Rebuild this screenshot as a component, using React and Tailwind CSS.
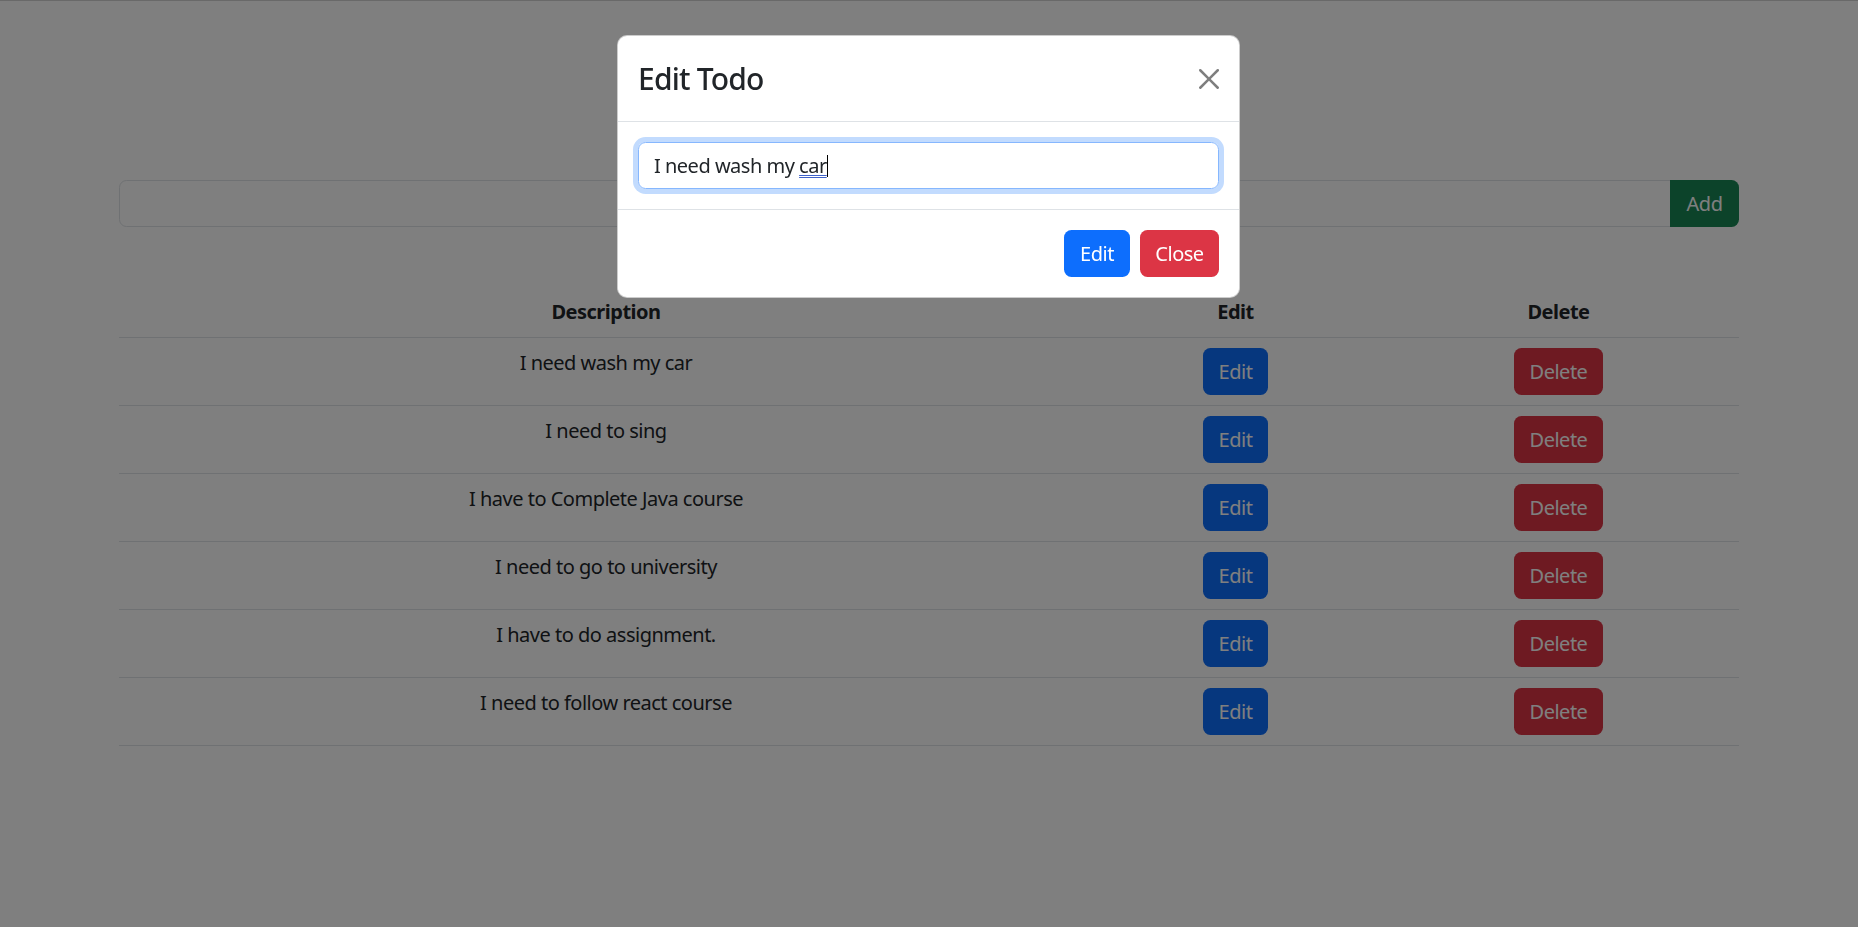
import React from "react";

const todos = [
    "I need wash my car",
    "I need to sing",
    "I have to Complete Java course",
    "I need to go to university",
    "I have to do assignment.",
    "I need to follow react course",
];

function CloseIcon() {
    return (
        <svg width="20" height="20" viewBox="0 0 16 16" className="opacity-50">
            <path
                fill="#000"
                d="M.293.293a1 1 0 0 1 1.414 0L8 6.586 14.293.293a1 1 0 1 1 1.414 1.414L9.414 8l6.293 6.293a1 1 0 0 1-1.414 1.414L8 9.414l-6.293 6.293a1 1 0 0 1-1.414-1.414L6.586 8 .293 1.707a1 1 0 0 1 0-1.414z"
            />
        </svg>
    );
}

function TodoRow({ text }) {
    return (
        <div className="grid grid-cols-[974px_285px_361px] border-b border-[#dee2e6] py-[10px]">
            <div className="text-center">{text}</div>
            <div className="flex justify-center">
                <button type="button" className="w-[65px] h-[47px] rounded-[7.5px] bg-[#0d6efd] text-white">
                    Edit
                </button>
            </div>
            <div className="flex justify-center">
                <button type="button" className="w-[89px] h-[47px] rounded-[7.5px] bg-[#dc3545] text-white">
                    Delete
                </button>
            </div>
        </div>
    );
}

export default function App() {
    return (
        <div className="relative min-h-[927px] bg-white border-t border-[#d2d2d2] font-['Noto_Sans',sans-serif] text-[20px] leading-[30px] tracking-[-0.5px] text-[#212529]">
            <div className="w-[1620px] mx-auto pt-[179px]">
                <div className="flex h-[47px]">
                    <input
                        type="text"
                        className="flex-1 min-w-0 border border-[#dee2e6] rounded-l-[7.5px] px-[15px] outline-none bg-white"
                    />
                    <button type="button" className="w-[69px] -ml-px bg-[#198754] text-white rounded-r-[7.5px]">
                        Add
                    </button>
                </div>

                <div className="mt-[60px]">
                    <div className="grid grid-cols-[974px_285px_361px] border-b border-[#dee2e6] py-[10px] text-center font-bold">
                        <div>Description</div>
                        <div>Edit</div>
                        <div>Delete</div>
                    </div>
                    {todos.map((t) => (
                        <TodoRow key={t} text={t} />
                    ))}
                </div>
            </div>

            {/* modal backdrop */}
            <div className="fixed inset-0 bg-black/50" />

            <div className="absolute top-[34px] left-[617px] w-[623px] bg-white rounded-[10px] border border-black/20">
                <div className="flex items-center justify-between px-[20px] py-[20px] border-b border-[#dee2e6]">
                    <div className="text-[30px] leading-[45px] font-medium tracking-[-0.8px]">Edit Todo</div>
                    <button type="button" className="w-[30px] h-[30px] flex items-center justify-center -mr-[5px]">
                        <CloseIcon />
                    </button>
                </div>
                <div className="p-[20px]">
                    <div className="h-[47px] flex items-center border border-[#86b7fe] rounded-[7.5px] px-[15px] shadow-[0_0_0_5px_rgba(13,110,253,0.25)]">
                        <span className="whitespace-pre">I need wash my </span>
                        <span className="underline decoration-double decoration-1 decoration-[#3f62c9] underline-offset-[2px]">car</span>
                        <span className="inline-block w-px h-[22px] bg-black" />
                    </div>
                </div>
                <div className="flex justify-end gap-[10px] px-[20px] py-[20px] border-t border-[#dee2e6]">
                    <button type="button" className="w-[66px] h-[47px] rounded-[7.5px] bg-[#0d6efd] text-white">
                        Edit
                    </button>
                    <button type="button" className="w-[79px] h-[47px] rounded-[7.5px] bg-[#dc3545] text-white">
                        Close
                    </button>
                </div>
            </div>
        </div>
    );
}
